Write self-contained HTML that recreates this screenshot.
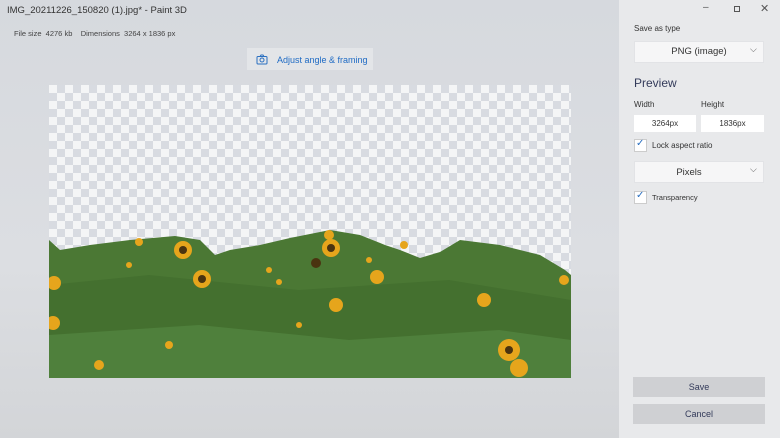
<!DOCTYPE html><html><head><style>
*{margin:0;padding:0;box-sizing:border-box}
body{width:780px;height:438px;overflow:hidden;background:#d9dbdf;font-family:"Liberation Sans",sans-serif;position:relative}
.t{position:absolute;white-space:nowrap}
#left{position:absolute;left:0;top:0;width:619px;height:438px;background:linear-gradient(#d6d9de,#dcdee2 60%,#d3d5d8)}
#panel{position:absolute;left:619px;top:0;width:161px;height:438px;background:#e8e9eb}
.box{position:absolute;background:#f6f6f7;border:1px solid #e2e3e6}
.btn{position:absolute;background:#cfd0d3;color:#333a5a;font-size:9px;text-align:center}
.chk{position:absolute;width:13px;height:13px;background:#fff;border:1px solid #ccc}
#img{position:absolute;left:49px;top:85px;width:522px;height:293px;
background-color:#f4f5f6;background-image:linear-gradient(45deg,#d8dbe1 25%,transparent 25%,transparent 75%,#d8dbe1 75%),linear-gradient(45deg,#d8dbe1 25%,transparent 25%,transparent 75%,#d8dbe1 75%);background-size:16px 16px;background-position:0 0,8px 8px}
</style></head><body>
<div id="left"></div>
<div class="t" style="left:7px;top:5px;font-size:9.5px;color:#333">IMG_20211226_150820 (1).jpg* - Paint 3D</div>
<div class="t" style="left:14px;top:29px;font-size:7.5px;color:#444">File size&nbsp; 4276 kb &nbsp;&nbsp; Dimensions&nbsp; 3264 x 1836 px</div>
<div style="position:absolute;left:247px;top:48px;width:126px;height:22px;background:#e3e5e8"></div>
<svg style="position:absolute;left:256px;top:54px" width="12" height="11" viewBox="0 0 12 11"><rect x="1" y="2.5" width="10" height="7.5" rx="1" fill="none" stroke="#2a6fc0"/><path d="M4 2.5 L5 1 H7 L8 2.5" fill="none" stroke="#2a6fc0"/><circle cx="6" cy="6" r="2" fill="none" stroke="#2a6fc0"/></svg>
<div class="t" style="left:277px;top:55px;font-size:9px;color:#1f6bc4">Adjust angle &amp; framing</div>
<div id="img">
<svg width="522" height="293" viewBox="0 0 522 293" style="position:absolute;left:0;top:0">
<path d="M0 155 L11 165 L41 160 L81 155 L126 151 L151 155 L166 170 L181 165 L211 160 L241 153 L281 145 L311 150 L336 160 L351 165 L371 173 L391 167 L411 155 L451 160 L491 170 L516 185 L522 190 L522 293 L0 293Z" fill="#4b7834"/>
<path d="M0 200 L100 190 L250 205 L400 195 L522 215 L522 293 L0 293Z" fill="#44702f"/>
<path d="M0 250 L150 240 L300 255 L450 245 L522 255 L522 293 L0 293Z" fill="#4f803c"/>
<g fill="#e6a51c">
<circle cx="134" cy="165" r="9"/><circle cx="153" cy="194" r="9"/><circle cx="282" cy="163" r="9"/><circle cx="287" cy="220" r="7"/><circle cx="328" cy="192" r="7"/><circle cx="280" cy="150" r="5"/><circle cx="5" cy="198" r="7"/><circle cx="4" cy="238" r="7"/><circle cx="435" cy="215" r="7"/><circle cx="460" cy="265" r="11"/><circle cx="470" cy="283" r="9"/><circle cx="230" cy="197" r="3"/><circle cx="80" cy="180" r="3"/><circle cx="90" cy="157" r="4"/><circle cx="220" cy="185" r="3"/><circle cx="250" cy="240" r="3"/><circle cx="120" cy="260" r="4"/><circle cx="50" cy="280" r="5"/><circle cx="515" cy="195" r="5"/><circle cx="355" cy="160" r="4"/><circle cx="320" cy="175" r="3"/>
</g>
<g fill="#4a3310"><circle cx="134" cy="165" r="4"/><circle cx="153" cy="194" r="4"/><circle cx="282" cy="163" r="4"/><circle cx="267" cy="178" r="5"/><circle cx="460" cy="265" r="4"/></g>
</svg></div>
<div id="panel"></div>
<div class="t" style="left:703px;top:2px;font-size:10px;color:#555">–</div>
<div style="position:absolute;left:734px;top:6px;width:6px;height:6px;border:1px solid #555"></div>
<div class="t" style="left:760px;top:2px;font-size:11px;color:#555">✕</div>
<div class="t" style="left:634px;top:24px;font-size:8px;color:#333">Save as type</div>
<div class="box" style="left:634px;top:41px;width:130px;height:22px"></div>
<div class="t" style="left:634px;top:46px;width:130px;text-align:center;font-size:9.5px;color:#333">PNG (image)</div>
<div class="t" style="left:750px;top:44px;font-size:9px;color:#555">⌵</div>
<div class="t" style="left:634px;top:76px;font-size:12px;color:#333a5a">Preview</div>
<div class="t" style="left:634px;top:100px;font-size:8px;color:#333">Width</div>
<div class="t" style="left:701px;top:100px;font-size:8px;color:#333">Height</div>
<div style="position:absolute;left:634px;top:115px;width:62px;height:17px;background:#fff"></div>
<div class="t" style="left:634px;top:119px;width:62px;text-align:center;font-size:8px;color:#333">3264px</div>
<div style="position:absolute;left:701px;top:115px;width:63px;height:17px;background:#fff"></div>
<div class="t" style="left:701px;top:119px;width:63px;text-align:center;font-size:8px;color:#333">1836px</div>
<div class="chk" style="left:634px;top:139px"></div>
<div class="t" style="left:636px;top:138px;font-size:10px;color:#2a6fc0">✓</div>
<div class="t" style="left:652px;top:141px;font-size:8px;color:#333">Lock aspect ratio</div>
<div class="box" style="left:634px;top:161px;width:130px;height:22px"></div>
<div class="t" style="left:634px;top:167px;width:110px;text-align:center;font-size:9.5px;color:#333">Pixels</div>
<div class="t" style="left:750px;top:164px;font-size:9px;color:#555">⌵</div>
<div class="chk" style="left:634px;top:191px"></div>
<div class="t" style="left:636px;top:190px;font-size:10px;color:#2a6fc0">✓</div>
<div class="t" style="left:652px;top:193px;font-size:7.5px;color:#333">Transparency</div>
<div class="btn" style="left:633px;top:377px;width:132px;height:20px;line-height:20px">Save</div>
<div class="btn" style="left:633px;top:404px;width:132px;height:20px;line-height:20px">Cancel</div>
</body></html>
